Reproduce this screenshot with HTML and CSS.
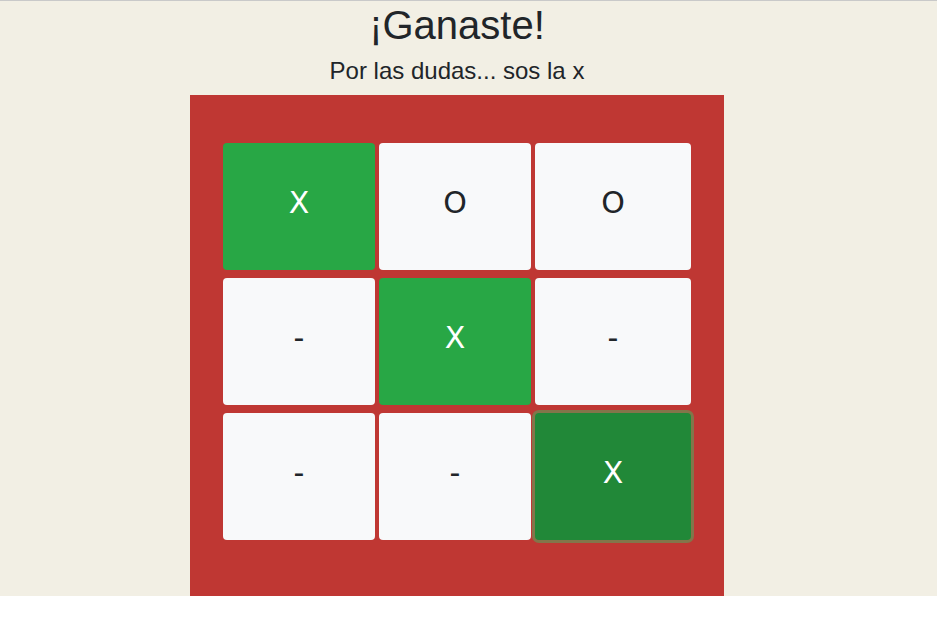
FILE: index.html
```html
<!DOCTYPE html>
<html lang="es">
<head>
<meta charset="utf-8">
<title>Ta-Te-Ti</title>
<link rel="stylesheet" href="styles.css">
</head>
<body>
<div class="page">
  <h1 class="title">¡Ganaste!</h1>
  <h4 class="subtitle">Por las dudas... sos la x</h4>
  <div class="board">
    <div class="grid">
      <button class="cell win">X</button>
      <button class="cell">O</button>
      <button class="cell">O</button>
      <button class="cell">-</button>
      <button class="cell win">X</button>
      <button class="cell">-</button>
      <button class="cell">-</button>
      <button class="cell">-</button>
      <button class="cell win focus">X</button>
    </div>
  </div>
</div>
</body>
</html>
```

FILE: styles.css
```css
html, body {
  margin: 0;
  padding: 0;
  background: #ffffff;
}

.page {
  background: #f2efe4;
  border-top: 1px solid #c9c9c9;
  padding-right: 23px;
  font-family: "Liberation Sans", Arial, sans-serif;
  color: #212529;
  text-align: center;
  display: flex;
  flex-direction: column;
  align-items: center;
}

.title {
  margin: 0 0 8px;
  font-size: 40px;
  font-weight: 400;
  line-height: 1.2;
}

.subtitle {
  margin: 0 0 9px;
  font-size: 24px;
  font-weight: 400;
  line-height: 1.2;
}

.board {
  width: 534px;
  background: #bf3733;
  padding: 48px 33px 56px;
  box-sizing: border-box;
}

.grid {
  display: grid;
  grid-template-columns: 152px 152px 156px;
  grid-auto-rows: 127px;
  column-gap: 4px;
  row-gap: 8px;
}

.cell {
  border: 0;
  border-radius: 4px;
  background: #f8f9fa;
  color: #212529;
  font-family: "DejaVu Sans", sans-serif;
  font-size: 30px;
  line-height: 1;
  padding: 0 0 6px;
  margin: 0;
  cursor: pointer;
}

.cell.win {
  background: #28a745;
  color: #ffffff;
}

.cell.focus {
  background: #218838;
  box-shadow: 0 0 0 3px rgba(72, 180, 97, 0.5);
}
```
